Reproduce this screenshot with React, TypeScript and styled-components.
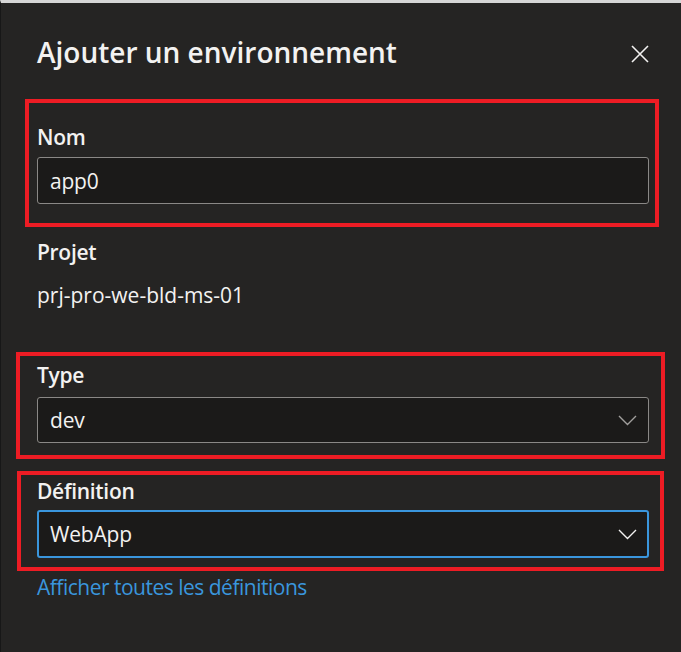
import React from "react";
import styled, { createGlobalStyle } from "styled-components";

const Global = createGlobalStyle`
  html, body { margin: 0; padding: 0; background: #252423; }
  * { box-sizing: border-box; }
`;

const Panel = styled.div`
  width: 681px;
  height: 652px;
  background: #252423;
  border-top: 3px solid #d6d6d6;
  border-left: 1px solid #171717;
  padding: 31px 32px 0 36px;
  font-family: "Open Sans", "Noto Sans", sans-serif;
  color: #f3f2f1;
  display: flex;
  flex-direction: column;
`;

const Header = styled.div`
  display: flex;
  align-items: flex-start;
  justify-content: space-between;
  margin-bottom: 29px;
`;

const Title = styled.h1`
  margin: 0;
  font-size: 28px;
  line-height: 36px;
  font-weight: 600;
  letter-spacing: 0;
`;

const CloseButton = styled.button`
  border: 0;
  background: transparent;
  padding: 0;
  margin-top: 11px;
  width: 18px;
  height: 18px;
  display: flex;
  cursor: pointer;
`;

const Highlight = styled.div<{ $pl: number; $pr: number; $pt: number; $pb: number }>`
  border: 4px solid #ed1c24;
  margin-left: ${(p) => -(p.$pl + 4)}px;
  margin-right: ${(p) => -(p.$pr + 4)}px;
  padding: ${(p) => `${p.$pt}px ${p.$pr}px ${p.$pb}px ${p.$pl}px`};
  display: flex;
  flex-direction: column;
`;

const Label = styled.div<{ $gap: number }>`
  font-size: 21px;
  line-height: 28px;
  font-weight: 600;
  letter-spacing: -0.3px;
  margin-bottom: ${(p) => p.$gap}px;
`;

const Value = styled.div`
  font-size: 21px;
  line-height: 28px;
  font-weight: 400;
  letter-spacing: 0;
`;

const Field = styled.div<{ $active?: boolean; $h: number }>`
  height: ${(p) => p.$h}px;
  background: #1b1a19;
  border: ${(p) => (p.$active ? "2px solid #3a96dd" : "1px solid #8a8886")};
  border-radius: 3px;
  display: flex;
  align-items: center;
  justify-content: space-between;
  padding: 0 ${(p) => (p.$active ? 10 : 11)}px 0 ${(p) => (p.$active ? 11 : 12)}px;
  font-size: 21px;
  font-weight: 400;
  letter-spacing: -0.2px;
  color: #f3f2f1;
`;

const Static = styled.div<{ $mt: number; $mb: number }>`
  margin-top: ${(p) => p.$mt}px;
  margin-bottom: ${(p) => p.$mb}px;
  display: flex;
  flex-direction: column;
`;

const Link = styled.a`
  font-size: 21px;
  line-height: 28px;
  color: #3a96dd;
  text-decoration: none;
  letter-spacing: -0.5px;
  margin-top: 2px;
`;

const Chevron = ({ color }: { color: string }) => (
  <svg width="19" height="11" viewBox="0 0 19 11">
    <path d="M1 1 L9.5 9.5 L18 1" fill="none" stroke={color} strokeWidth="1.4" />
  </svg>
);

export default function App() {
  return (
    <>
      <Global />
      <Panel>
        <Header>
          <Title>Ajouter un environnement</Title>
          <CloseButton aria-label="Fermer">
            <svg width="18" height="18" viewBox="0 0 18 18">
              <path d="M1 1 L17 17 M17 1 L1 17" stroke="#f3f2f1" strokeWidth="1.6" />
            </svg>
          </CloseButton>
        </Header>

        <Highlight $pl={8} $pr={6} $pt={20} $pb={19}>
          <Label $gap={6}>Nom</Label>
          <Field $h={47}>app0</Field>
        </Highlight>

        <Static $mt={11} $mb={43}>
          <Label $gap={15}>Projet</Label>
          <Value>prj-pro-we-bld-ms-01</Value>
        </Static>

        <Highlight $pl={17} $pr={12} $pt={5} $pb={12}>
          <Label $gap={8}>Type</Label>
          <Field $h={46}>
            dev
            <Chevron color="#a19f9d" />
          </Field>
        </Highlight>

        <Static $mt={12} $mb={0} />

        <Highlight $pl={16} $pr={11} $pt={2} $pb={9}>
          <Label $gap={5}>Définition</Label>
          <Field $h={48} $active>
            WebApp
            <Chevron color="#f3f2f1" />
          </Field>
        </Highlight>

        <Link href="#">Afficher toutes les définitions</Link>
      </Panel>
    </>
  );
}
